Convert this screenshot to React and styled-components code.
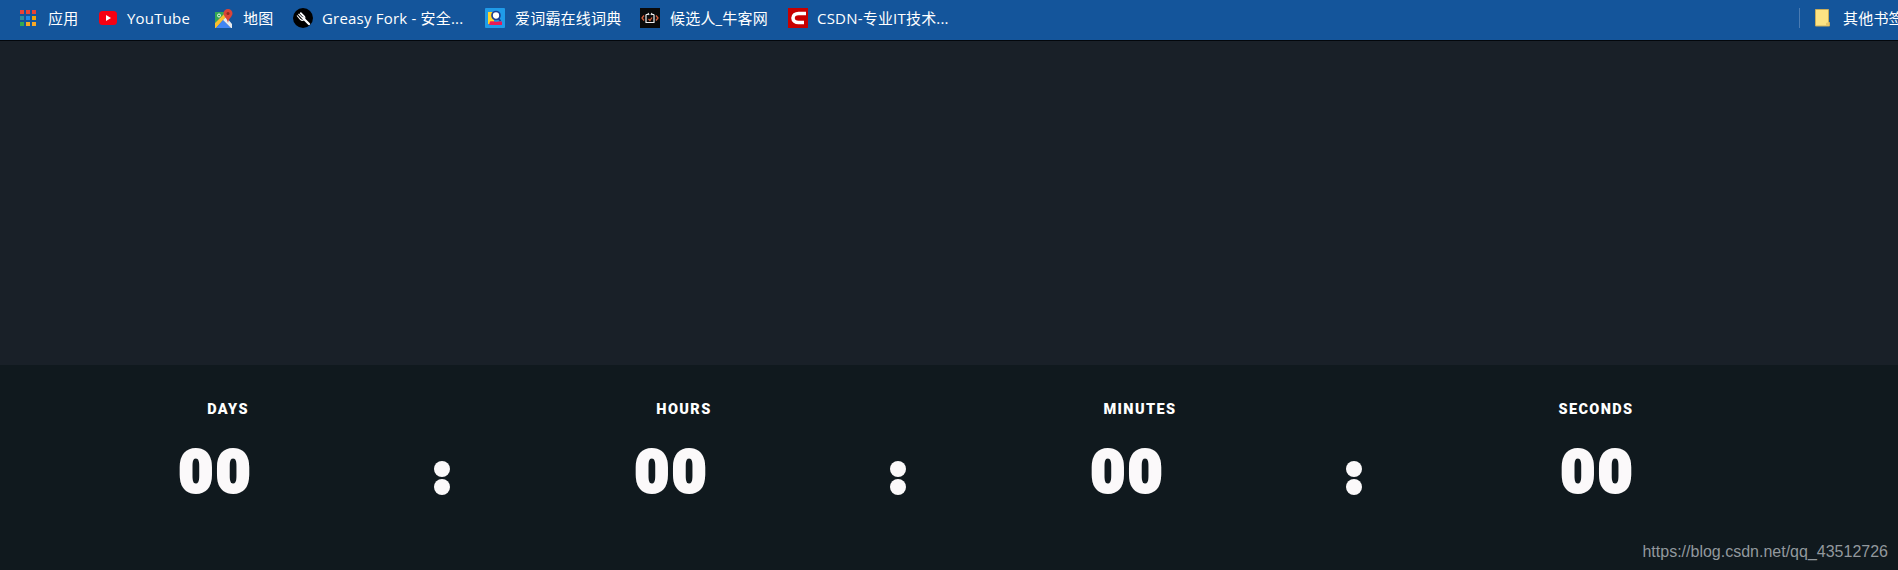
import React from "react";
import styled, { createGlobalStyle } from "styled-components";

const Global = createGlobalStyle`
  html, body { margin: 0; padding: 0; background: #192028; overflow: hidden; }
  #root { width: 1898px; height: 570px; }
`;

const Page = styled.div`
  width: 1898px;
  height: 570px;
  display: flex;
  flex-direction: column;
  background: #192028;
  position: relative;
  overflow: hidden;
`;

const Bar = styled.nav`
  flex: 0 0 40px;
  height: 40px;
  box-sizing: border-box;
  padding: 0 0 4px 20px;
  background: #14559b;
  display: flex;
  align-items: center;
  color: #fff;
  font: 15px/20px "Open Sans", "Noto Sans CJK SC", sans-serif;
  letter-spacing: 0.2px;
  white-space: nowrap;
`;

const BarEdge = styled.div`
  flex: 0 0 1px;
  background: #03070c;
`;

const Bookmark = styled.a`
  display: flex;
  align-items: center;
  gap: ${(p) => p.$gap ?? 10}px;
  width: ${(p) => p.$width}px;
  flex: none;
`;

const Label = styled.span`
  display: block;
  flex: none;
`;

const Others = styled.div`
  margin-left: auto;
  display: flex;
  align-items: center;
  box-sizing: border-box;
  width: 99px;
  flex: none;
  overflow: hidden;
  height: 20px;
  border-left: 1px solid #4a7bb2;
  padding-left: 15px;
  gap: 12px;
`;

const Main = styled.main`
  flex: 0 0 324px;
`;

const Panel = styled.section`
  flex: 0 0 187px;
  background: #10191e;
  display: grid;
  grid-template-columns: repeat(4, 456px);
  align-content: start;
  padding-top: 37px;
  color: #fbf9fa;
`;

const Cell = styled.div`
  display: flex;
  flex-direction: column;
`;

const Unit = styled.div`
  text-align: center;
  font: 900 14.5px/16px Roboto, sans-serif;
  letter-spacing: 1.4px;
  color: #fff;
`;

const Row = styled.div`
  display: flex;
  align-items: center;
  margin-top: 24px;
  height: 60px;
`;

const Digits = styled.div`
  flex: 1;
  text-align: center;
  padding-left: 4px;
  font: 900 59px/60px Roboto, sans-serif;
  letter-spacing: 3px;
  -webkit-text-stroke: 3px #fbf9fa;
`;

const Colon = styled.div`
  flex: 0 0 28px;
  display: flex;
  flex-direction: column;
  align-items: center;
  gap: 2px;
  padding-top: 12px;
`;

const Dot = styled.i`
  display: block;
  width: 16px;
  height: 16px;
  border-radius: 50%;
  background: #fbf9fa;
`;

const Watermark = styled.div`
  position: absolute;
  right: 10px;
  bottom: 9px;
  font: 16px/18px "Liberation Sans", Arial, sans-serif;
  color: #92989d;
`;

const Svg = styled.svg`
  display: block;
  flex: none;
`;

const AppsIcon = () => {
  const colors = ["#ea4335", "#ea4335", "#ea4335", "#2f8f9a", "#1e88e5", "#f0a30a", "#34a853", "#f9a825", "#f9a825"];
  return (
    <Svg width="16" height="16" viewBox="0 0 16 16">
      {colors.map((c, i) => (
        <rect key={i} x={(i % 3) * 6} y={Math.floor(i / 3) * 6} width="4" height="4" fill={c} />
      ))}
    </Svg>
  );
};

const YouTubeIcon = () => (
  <Svg width="18" height="14" viewBox="0 0 18 14">
    <rect width="18" height="14" rx="3.5" fill="#f60012" />
    <path d="M7 4l5 3-5 3z" fill="#fff" />
  </Svg>
);

const MapsIcon = () => (
  <Svg width="18" height="19" viewBox="0 0 18 19">
    <path d="M0 3h11l-11 11z" fill="#34a853" />
    <path d="M0 14L11 3h2l-2 5L1 19H0z" fill="#fbc02d" />
    <path d="M1 19L8 11l8 8z" fill="#4285f4" />
    <path d="M8 11l3-3 6 7v4h-1z" fill="#e8eaed" />
    <circle cx="4" cy="6.500" r="1.500" fill="none" stroke="#fff" strokeWidth="0.9" />
    <path d="M13 0a4.500 4.500 0 0 1 4.500 4.500c0 3-4 5-4.500 9.500-.5-4.500-4.500-6.500-4.500-9.500A4.500 4.500 0 0 1 13 0z" fill="#db4437" />
    <circle cx="13" cy="4.500" r="1.500" fill="#8c2b22" />
  </Svg>
);

const ForkIcon = () => (
  <Svg width="20" height="20" viewBox="0 0 20 20">
    <circle cx="10" cy="10" r="10" fill="#000" />
    <path d="M10 10l6 6" stroke="#fff" strokeWidth="2.4" strokeLinecap="round" />
    <path d="M4 7.500l3.500 4c1 1 2.500 1 3.500 0s1-2.500 0-3.500L7.500 4.500M5.500 6l3.800 4M7 4.800l3.500 3.800" stroke="#fff" strokeWidth="1.1" fill="none" />
  </Svg>
);

const IcibaIcon = () => (
  <Svg width="20" height="20" viewBox="0 0 20 20">
    <rect width="20" height="20" rx="1" fill="#1f9be8" />
    <path d="M3 4h6v12H3z" fill="#ffd42a" />
    <circle cx="11" cy="7.500" r="4" fill="#fff" stroke="#1c3f94" strokeWidth="1.700" />
    <path d="M13.500 10.500l2 2.500" stroke="#1c3f94" strokeWidth="1.700" />
    <path d="M4 17l1-3.500c3-1 6 1 8 0l4 0v3.500z" fill="#ea1a55" />
  </Svg>
);

const CandidateIcon = () => (
  <Svg width="20" height="20" viewBox="0 0 20 20">
    <rect width="20" height="20" fill="#0a0a0a" />
    <path d="M6 6.500v8h8v-8M6 6.500h2M14 6.500h-2M8 5l1 2M12 5l-1 2" fill="none" stroke="#efefef" strokeWidth="1.200" />
    <path d="M8.500 11l1.500 1.500 2-3" fill="none" stroke="#e0603a" strokeWidth="1.200" />
    <path d="M4 7.500L2 10l2 2.500M16 7.500L18 10l-2 2.500" fill="none" stroke="#d9603c" strokeWidth="1.300" />
  </Svg>
);

const CsdnIcon = () => (
  <Svg width="20" height="20" viewBox="0 0 20 20">
    <rect width="20" height="20" fill="#c80000" />
    <path d="M18 5.500h-7.500c-3 0-5.500 1.800-5.500 4.500s2.500 4.500 5.500 4.500H16" fill="none" stroke="#fff" strokeWidth="3.600" />
  </Svg>
);

const FolderIcon = () => (
  <Svg width="16" height="18" viewBox="0 0 16 18">
    <path d="M.5.500h13v13l1 0v3.500H.5z" fill="#fde383" stroke="#c9ad5a" />
    <path d="M11 17v-3l3-1v4z" fill="#e6c66a" />
  </Svg>
);

const bookmarks = [
  { icon: <AppsIcon />, text: "应用", width: 79, gap: 12 },
  { icon: <YouTubeIcon />, text: "YouTube", width: 116 },
  { icon: <MapsIcon />, text: "地图", width: 78 },
  { icon: <ForkIcon />, text: "Greasy Fork - 安全...", width: 192, gap: 9 },
  { icon: <IcibaIcon />, text: "爱词霸在线词典", width: 155 },
  { icon: <CandidateIcon />, text: "候选人_牛客网", width: 148 },
  { icon: <CsdnIcon />, text: "CSDN-专业IT技术...", width: 180, gap: 9 },
];

const units = ["DAYS", "HOURS", "MINUTES", "SECONDS"];

export default function App() {
  return (
    <Page>
      <Global />
      <Bar>
        {bookmarks.map((b) => (
          <Bookmark key={b.text} $width={b.width} $gap={b.gap}>
            {b.icon}
            <Label>{b.text}</Label>
          </Bookmark>
        ))}
        <Others>
          <FolderIcon />
          <Label>其他书签</Label>
        </Others>
      </Bar>
      <BarEdge />
      <Main />
      <Panel>
        {units.map((u, i) => (
          <Cell key={u}>
            <Unit>{u}</Unit>
            <Row>
              <Digits>00</Digits>
              {i < 3 && (
                <Colon role="img" aria-label=":">
                  <Dot />
                  <Dot />
                </Colon>
              )}
            </Row>
          </Cell>
        ))}
      </Panel>
      <Watermark>https://blog.csdn.net/qq_43512726</Watermark>
    </Page>
  );
}
